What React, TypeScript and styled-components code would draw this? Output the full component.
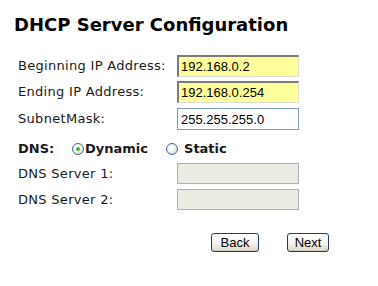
import React from "react";
import styled, { createGlobalStyle } from "styled-components";

const Global = createGlobalStyle`
  html, body { margin: 0; padding: 0; background: #ffffff; }
  body { font-family: "DejaVu Sans", Verdana, sans-serif; }
`;

const Page = styled.div`
  padding: 13px 0 0 14px;
  width: 364px;
`;

const Title = styled.h1`
  margin: 0;
  font-family: "DejaVu Sans", Verdana, sans-serif;
  font-weight: bold;
  font-size: 18px;
  line-height: 23px;
  color: #000;
`;

const Form = styled.div`
  margin-top: 19px;
  margin-left: 4px;
  display: grid;
  grid-template-columns: 159px 122px;
  grid-template-rows: 26px 27px 26px 29px 26px 22px;
  align-items: start;
`;

const Label = styled.div`
  font-size: 13px;
  letter-spacing: 0.3px;
  line-height: 22px;
  color: #1a1a1a;
  white-space: nowrap;
`;

const Field = styled.input<{ $variant: "yellow" | "plain" | "disabled" }>`
  box-sizing: border-box;
  width: 122px;
  height: 22px;
  margin: 0;
  padding: 0 0 0 2px;
  font-family: "Liberation Sans", Arial, sans-serif;
  font-size: 13px;
  color: #000;
  outline: none;
  ${(p) =>
    p.$variant === "yellow"
      ? `
    background: #ffff9c;
    border-top: 2px solid #7b7b7b;
    border-left: 2px solid #7b7b7b;
    border-right: 1px solid #dcdcd4;
    border-bottom: 1px solid #dcdcd4;
  `
      : p.$variant === "plain"
      ? `
    background: #ffffff;
    border: 1px solid #7f9db9;
    padding-left: 3px;
  `
      : `
    background: #ebebe4;
    border: 1px solid #a5b4c4;
    height: 21px;
  `}
`;

const DnsRow = styled.div`
  grid-column: 1 / span 2;
  display: flex;
  align-items: center;
  height: 29px;
  font-weight: bold;
  font-size: 13px;
  color: #1a1a1a;
`;

const DnsLabel = styled.span`
  width: 54px;
  font-size: 13px;
`;

const RadioOption = styled.label<{ $gap: number }>`
  display: flex;
  align-items: center;
  margin-right: ${(p) => p.$gap}px;
  cursor: default;
`;

const RadioCircle = styled.span<{ $checked: boolean }>`
  box-sizing: border-box;
  width: 12px;
  height: 12px;
  border-radius: 50%;
  border: 1px solid #43698f;
  background: radial-gradient(circle at 40% 35%, #ffffff 0%, #f1f0ea 45%, #d4d1c3 100%);
  margin-right: ${(p) => (p.$checked ? 1 : 6)}px;
  display: inline-flex;
  align-items: center;
  justify-content: center;
  &::after {
    content: "";
    display: ${(p) => (p.$checked ? "block" : "none")};
    width: 4px;
    height: 4px;
    border-radius: 50%;
    background: #3cb23c;
  }
`;

const ButtonRow = styled.div`
  display: flex;
  gap: 28px;
  margin-top: 22px;
  margin-left: 197px;
`;

const Button = styled.button<{ $w: number }>`
  box-sizing: border-box;
  width: ${(p) => p.$w}px;
  height: 19px;
  padding: 0;
  font-family: "Liberation Sans", Arial, sans-serif;
  font-size: 13px;
  color: #000;
  border: 1px solid #1d3f66;
  border-radius: 3px;
  background: linear-gradient(#ffffff, #f1f0ea 60%, #dcd8c8);
  box-shadow: inset 0 -1px 0 #cfcbbb;
`;

export default function App() {
  return (
    <Page>
      <Global />
      <Title>DHCP Server Configuration</Title>
      <Form>
        <Label>Beginning IP Address:</Label>
        <Field $variant="yellow" defaultValue="192.168.0.2" />
        <Label>Ending IP Address:</Label>
        <Field $variant="yellow" defaultValue="192.168.0.254" />
        <Label>SubnetMask:</Label>
        <Field $variant="plain" defaultValue="255.255.255.0" />
        <DnsRow>
          <DnsLabel>DNS:</DnsLabel>
          <RadioOption $gap={18}>
            <RadioCircle $checked={true} />
            Dynamic
          </RadioOption>
          <RadioOption $gap={0}>
            <RadioCircle $checked={false} />
            Static
          </RadioOption>
        </DnsRow>
        <Label>DNS Server 1:</Label>
        <Field $variant="disabled" disabled />
        <Label>DNS Server 2:</Label>
        <Field $variant="disabled" disabled />
      </Form>
      <ButtonRow>
        <Button $w={48}>Back</Button>
        <Button $w={42}>Next</Button>
      </ButtonRow>
    </Page>
  );
}
